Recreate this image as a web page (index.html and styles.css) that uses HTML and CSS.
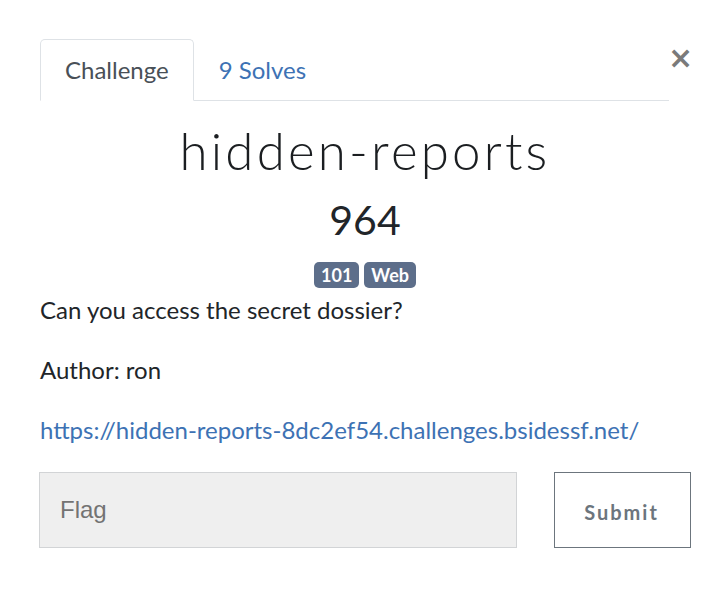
FILE: index.html
```html
<!DOCTYPE html>
<html>
<head>
<meta charset="utf-8">
<link rel="stylesheet" href="styles.css">
</head>
<body>
<div class="modal">
  <button class="close" type="button">×</button>
  <ul class="tabs">
    <li class="tab active">Challenge</li>
    <li class="tab"><a href="#">9 Solves</a></li>
  </ul>
  <div class="body">
    <h2 class="title">hidden-reports</h2>
    <h3 class="value">964</h3>
    <div class="tags">
      <span class="badge">101</span>
      <span class="badge">Web</span>
    </div>
    <div class="desc">
      <p>Can you access the secret dossier?</p>
      <p>Author: ron</p>
      <p><a href="#">https://hidden-reports-8dc2ef54.challenges.bsidessf.net/</a></p>
    </div>
    <form class="flag-form">
      <input class="flag-input" type="text" placeholder="Flag">
      <button class="submit" type="button">Submit</button>
    </form>
  </div>
</div>
</body>
</html>
```
FILE: styles.css
```css
* { box-sizing: border-box; }
html, body { margin: 0; padding: 0; background: #fff; }
body {
  font-family: Lato, "Noto Sans", sans-serif;
  color: #212529;
  width: 728px;
  height: 610px;
}
.modal {
  position: relative;
  padding: 39px 0 0 39px;
  width: 691px;
}
.close {
  position: absolute;
  top: 40px;
  right: 3px;
  border: 0;
  background: none;
  font-family: "DejaVu Sans", sans-serif;
  font-size: 30px;
  font-weight: 700;
  line-height: 36px;
  color: #7a7a7a;
  padding: 0;
  width: 20px;
}
.tabs {
  list-style: none;
  margin: 0 0 0 1px;
  padding: 0;
  display: flex;
  width: 629px;
  border-bottom: 1px solid #dee2e6;
}
.tab {
  height: 62px;
  margin-bottom: -1px;
  padding: 0 24px;
  font-size: 24px;
  line-height: 60px;
  border: 1px solid transparent;
  border-radius: 5px 5px 0 0;
}
.tab.active {
  color: #495057;
  border-color: #dee2e6 #dee2e6 #fff;
  background: #fff;
}
.tab a {
  color: #3d72b4;
  text-decoration: none;
}
.body {
  width: 652px;
}
.title {
  margin: 20px 0 0;
  text-align: center;
  font-family: Lato, sans-serif;
  font-weight: 300;
  font-size: 51px;
  letter-spacing: 3.2px;
  line-height: 60px;
  color: #1b1e21;
}
.value {
  margin: 15px 0 0;
  text-align: center;
  font-weight: 400;
  font-size: 41px;
  line-height: 48px;
}
.tags {
  display: flex;
  justify-content: center;
  gap: 5px;
  margin-top: 18px;
}
.badge {
  background: #5d6e8a;
  color: #fff;
  font-weight: 700;
  font-size: 18px;
  line-height: 26px;
  height: 26px;
  padding: 0 7px;
  border-radius: 5px;
}
.desc {
  margin-top: 4px;
}
.desc p {
  margin: 0 0 24px 1px;
  font-size: 24px;
  line-height: 36px;
}
.desc p:last-child { margin-bottom: 0; }
.desc a {
  color: #3d72b4;
  text-decoration: none;
}
.flag-form {
  display: flex;
  justify-content: space-between;
  margin-top: 24px;
}
.flag-input {
  width: 478px;
  height: 76px;
  background: #efefef;
  border: 1px solid #d2d4d6;
  padding: 0 20px;
  font-family: "Liberation Sans", Arial, sans-serif;
  font-size: 24px;
  color: #495057;
  outline: none;
}
.flag-input::placeholder { color: #737373; }
.submit {
  width: 137px;
  height: 76px;
  background: #fff;
  border: 1px solid #6c757d;
  color: #6c757d;
  font-family: Lato, sans-serif;
  font-weight: 700;
  font-size: 20px;
  letter-spacing: 2px;
  padding: 4px 2px 0 0;
}
```
